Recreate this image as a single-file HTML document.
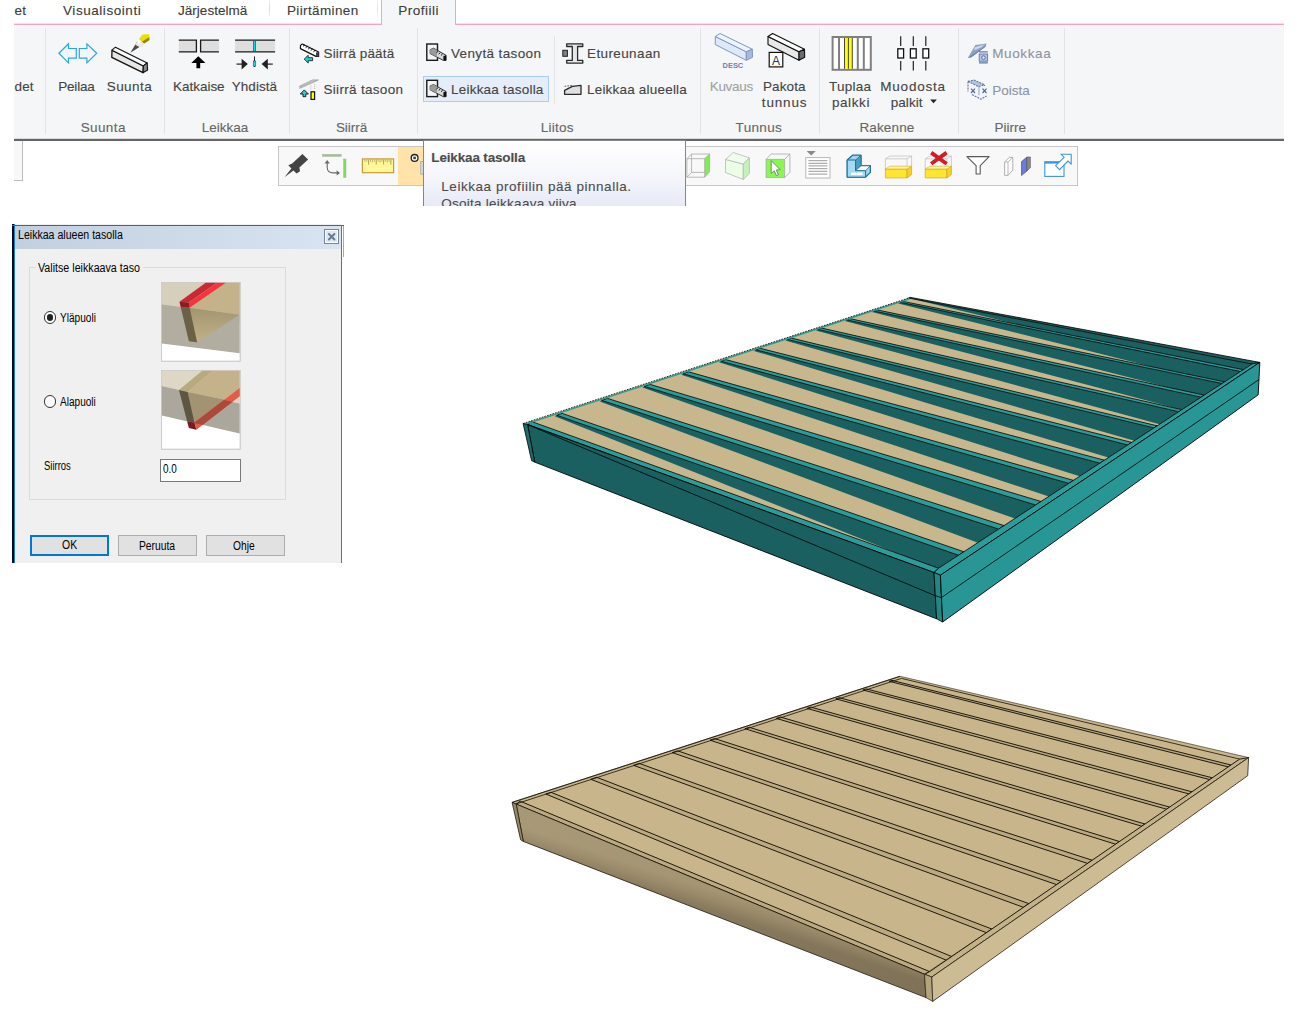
<!DOCTYPE html><html lang="fi"><head><meta charset="utf-8"><title>Leikkaa tasolla</title><style>
html,body{margin:0;padding:0;background:#fff;}
body{width:1296px;height:1032px;position:relative;overflow:hidden;font-family:'Liberation Sans',sans-serif;}
.t{position:absolute;white-space:pre;line-height:1;font-family:'Liberation Sans',sans-serif;}
.abs{position:absolute;}
#ribbon{position:absolute;left:14px;top:0;width:1270px;height:141px;overflow:hidden;}
#ribbon .body{position:absolute;left:0;top:25px;width:1270px;height:114px;background:#f5f6f7;}
#ribbon .bline{position:absolute;left:0;top:139.2px;width:1270px;height:1.7px;background:#666;}
#ribbon .bline0{position:absolute;left:0;top:138.4px;width:1270px;height:1px;background:#d9dadb;}
.pink{position:absolute;background:#f3a5c8;}
.sep{position:absolute;width:1px;background:#e2e3e4;top:28px;height:106px;}
.hl{position:absolute;left:409.4px;top:76.4px;width:125.2px;height:26px;box-sizing:border-box;border:1px solid #a9cdf4;background:#e5edf8;}
#toolbar{position:absolute;left:278px;top:146px;width:800px;height:39.6px;box-sizing:border-box;border:1px solid #c6c6c6;background:#f8f8f8;}
#tbhl{position:absolute;left:398px;top:147px;width:27px;height:37.6px;background:#ffe3a9;}
#leftbox{position:absolute;left:14px;top:141px;width:8.6px;height:39.6px;box-sizing:border-box;border-right:1px solid #bdbdbd;border-bottom:1px solid #bdbdbd;background:#f8f8f8;}
#tooltip{position:absolute;left:423px;top:139.9px;width:262.6px;height:66.1px;box-sizing:border-box;border:1px solid #858585;border-bottom:none;background:linear-gradient(#ffffff,#f4f5fb 60%,#e6eaf6);overflow:hidden;}
#dialog{position:absolute;left:12px;top:224px;width:330.2px;height:338.6px;background:linear-gradient(#fff,#fff 0.5px,#f0f0f0 0.5px);overflow:hidden;}
#dialog .title{position:absolute;left:3.2px;top:1.6px;right:1.2px;height:23.3px;background:linear-gradient(90deg,#c2cfdf,#d8e4f1);}
.grp{position:absolute;left:17px;top:43px;width:257px;height:233px;box-sizing:border-box;border:1px solid #dcdcdc;}
.btn{position:absolute;top:311.3px;height:20.6px;box-sizing:border-box;border:1px solid #adadad;background:#e1e1e1;}
.radio{position:absolute;width:12.6px;height:12.6px;box-sizing:border-box;border:1px solid #333;border-radius:50%;background:#fff;}
</style></head><body>
<div id="ribbon">
<div class="body"></div><div class="bline0"></div><div class="bline"></div>
<div class="pink" style="left:0;top:23px;width:368px;height:2px;background:linear-gradient(#fbdcea 50%,#f4a3c7 50%)"></div>
<div class="pink" style="left:441.4px;top:23px;width:829px;height:2px;background:linear-gradient(#fbdcea 50%,#f4a3c7 50%)"></div>
<div class="pink" style="left:366.9px;top:0;width:1.5px;height:25px"></div>
<div class="pink" style="left:440.9px;top:0;width:1.5px;height:25px"></div>
<div class="abs" style="left:368.2px;top:0;width:72.8px;height:25.4px;background:#f5f6f7"></div>
<div class="abs" style="left:255.2px;top:0;width:1px;height:17px;background:linear-gradient(#f3f3f3,#d8d8d8,#f3f3f3)"></div>
<div class="abs" style="left:362.6px;top:0;width:1px;height:17px;background:linear-gradient(#f6f6f6,#e2e2e2,#f6f6f6)"></div>
<div class="sep" style="left:31px"></div>
<div class="sep" style="left:150px"></div>
<div class="sep" style="left:275px"></div>
<div class="sep" style="left:403px"></div>
<div class="sep" style="left:686px"></div>
<div class="sep" style="left:805px"></div>
<div class="sep" style="left:944px"></div>
<div class="sep" style="left:1050px"></div>
<div class="sep" style="left:540px;top:36px;height:68px"></div>
<div class="hl"></div>
</div>
<div id="leftbox"></div>
<div id="toolbar"></div><div id="tbhl"></div>
<span class="t" style="left:14.5px;top:3.6px;font-size:13.5px;color:#3c3c3c;font-weight:400;letter-spacing:0.117px;-webkit-text-stroke:0.12px #3c3c3c">et</span>
<span class="t" style="left:63.0px;top:3.6px;font-size:13.5px;color:#3c3c3c;font-weight:400;letter-spacing:0.558px;-webkit-text-stroke:0.12px #3c3c3c">Visualisointi</span>
<span class="t" style="left:178.0px;top:3.6px;font-size:13.5px;color:#3c3c3c;font-weight:400;letter-spacing:0.024px;-webkit-text-stroke:0.12px #3c3c3c">Järjestelmä</span>
<span class="t" style="left:287.0px;top:3.6px;font-size:13.5px;color:#3c3c3c;font-weight:400;letter-spacing:0.370px;-webkit-text-stroke:0.12px #3c3c3c">Piirtäminen</span>
<span class="t" style="left:398.3px;top:3.6px;font-size:13.5px;color:#3c3c3c;font-weight:400;letter-spacing:0.492px;-webkit-text-stroke:0.12px #3c3c3c">Profiili</span>
<span class="t" style="left:14.5px;top:79.6px;font-size:13.5px;color:#444;font-weight:400;letter-spacing:0.173px;-webkit-text-stroke:0.12px #444">det</span>
<span class="t" style="left:58.3px;top:79.6px;font-size:13.5px;color:#444;font-weight:400;letter-spacing:-0.222px;-webkit-text-stroke:0.12px #444">Peilaa</span>
<span class="t" style="left:106.7px;top:79.6px;font-size:13.5px;color:#444;font-weight:400;letter-spacing:0.451px;-webkit-text-stroke:0.12px #444">Suunta</span>
<span class="t" style="left:173.0px;top:79.6px;font-size:13.5px;color:#444;font-weight:400;letter-spacing:-0.023px;-webkit-text-stroke:0.12px #444">Katkaise</span>
<span class="t" style="left:231.8px;top:79.6px;font-size:13.5px;color:#444;font-weight:400;letter-spacing:0.024px;-webkit-text-stroke:0.12px #444">Yhdistä</span>
<span class="t" style="left:323.5px;top:46.6px;font-size:13.5px;color:#444;font-weight:400;letter-spacing:0.146px;-webkit-text-stroke:0.12px #444">Siirrä päätä</span>
<span class="t" style="left:323.5px;top:82.6px;font-size:13.5px;color:#444;font-weight:400;letter-spacing:0.308px;-webkit-text-stroke:0.12px #444">Siirrä tasoon</span>
<span class="t" style="left:451.0px;top:46.6px;font-size:13.5px;color:#444;font-weight:400;letter-spacing:0.363px;-webkit-text-stroke:0.12px #444">Venytä tasoon</span>
<span class="t" style="left:451.0px;top:82.6px;font-size:13.5px;color:#444;font-weight:400;letter-spacing:0.219px;-webkit-text-stroke:0.12px #444">Leikkaa tasolla</span>
<span class="t" style="left:587.0px;top:46.6px;font-size:13.5px;color:#444;font-weight:400;letter-spacing:0.389px;-webkit-text-stroke:0.12px #444">Etureunaan</span>
<span class="t" style="left:587.0px;top:82.6px;font-size:13.5px;color:#444;font-weight:400;letter-spacing:0.198px;-webkit-text-stroke:0.12px #444">Leikkaa alueella</span>
<span class="t" style="left:709.7px;top:79.6px;font-size:13.5px;color:#a3a3a3;font-weight:400;letter-spacing:-0.289px;-webkit-text-stroke:0.12px #a3a3a3">Kuvaus</span>
<span class="t" style="left:763.0px;top:79.6px;font-size:13.5px;color:#444;font-weight:400;letter-spacing:0.111px;-webkit-text-stroke:0.12px #444">Pakota</span>
<span class="t" style="left:761.8px;top:95.6px;font-size:13.5px;color:#444;font-weight:400;letter-spacing:0.842px;-webkit-text-stroke:0.12px #444">tunnus</span>
<span class="t" style="left:828.9px;top:79.6px;font-size:13.5px;color:#444;font-weight:400;letter-spacing:0.270px;-webkit-text-stroke:0.12px #444">Tuplaa</span>
<span class="t" style="left:831.9px;top:95.6px;font-size:13.5px;color:#444;font-weight:400;letter-spacing:0.597px;-webkit-text-stroke:0.12px #444">palkki</span>
<span class="t" style="left:880.3px;top:79.6px;font-size:13.5px;color:#444;font-weight:400;letter-spacing:0.775px;-webkit-text-stroke:0.12px #444">Muodosta</span>
<span class="t" style="left:890.7px;top:95.6px;font-size:13.5px;color:#444;font-weight:400;letter-spacing:0.064px;-webkit-text-stroke:0.12px #444">palkit</span>
<span class="t" style="left:992.2px;top:46.6px;font-size:13.5px;color:#8e94a4;font-weight:400;letter-spacing:0.617px;-webkit-text-stroke:0.12px #8e94a4">Muokkaa</span>
<span class="t" style="left:992.2px;top:83.6px;font-size:13.5px;color:#8e94a4;font-weight:400;letter-spacing:0.011px;-webkit-text-stroke:0.12px #8e94a4">Poista</span>
<span class="t" style="left:80.7px;top:120.6px;font-size:13.5px;color:#666;font-weight:400;letter-spacing:0.384px;-webkit-text-stroke:0.12px #666">Suunta</span>
<span class="t" style="left:201.7px;top:120.6px;font-size:13.5px;color:#666;font-weight:400;letter-spacing:0.008px;-webkit-text-stroke:0.12px #666">Leikkaa</span>
<span class="t" style="left:335.9px;top:120.6px;font-size:13.5px;color:#666;font-weight:400;letter-spacing:-0.036px;-webkit-text-stroke:0.12px #666">Siirrä</span>
<span class="t" style="left:540.8px;top:120.6px;font-size:13.5px;color:#666;font-weight:400;letter-spacing:0.231px;-webkit-text-stroke:0.12px #666">Liitos</span>
<span class="t" style="left:735.6px;top:120.6px;font-size:13.5px;color:#666;font-weight:400;letter-spacing:0.328px;-webkit-text-stroke:0.12px #666">Tunnus</span>
<span class="t" style="left:859.4px;top:120.6px;font-size:13.5px;color:#666;font-weight:400;letter-spacing:0.150px;-webkit-text-stroke:0.12px #666">Rakenne</span>
<span class="t" style="left:994.4px;top:120.6px;font-size:13.5px;color:#666;font-weight:400;letter-spacing:0.014px;-webkit-text-stroke:0.12px #666">Piirre</span>
<svg class="abs" style="left:0;top:0" width="1296" height="200" viewBox="0 0 1296 200">
<polygon points="58.9,53.2 68.5,43.8 68.5,48.5 76.3,48.5 76.3,58.1 68.5,58.1 68.5,62.9" fill="none" stroke="#29a8e8" stroke-width="1.2"/>
<polygon points="96.7,53.2 86.9,43.8 86.9,48.5 79.3,48.5 79.3,58.1 86.9,58.1 86.9,62.9" fill="none" stroke="#29a8e8" stroke-width="1.2"/>
<polygon points="112,50.2 143.4,65.9 143,72.7 111.8,57.4" fill="#e6e6e6" stroke="#111" stroke-width="1.3" stroke-linejoin="round"/>
<polygon points="112,50.2 115.4,47.2 147.2,62.9 143.4,65.9" fill="#fafafa" stroke="#111" stroke-width="1.1" stroke-linejoin="round"/>
<polygon points="143.4,65.9 147.2,62.9 147.6,70.1 143,72.7" fill="#8a8a8a" stroke="#111" stroke-width="1.1" stroke-linejoin="round"/>
<polygon points="130.4,52.8 137.6,40.8 143.4,44.6" fill="#4a4a4a"/>
<polygon points="135.2,44.8 138.6,39.4 144.2,43.4 140.2,47.4" fill="#ecece4"/>
<polygon points="137.4,41.2 139,38.8 141.6,40.8 138.6,43.8" fill="#fff"/>
<polygon points="138.8,39.2 142.4,34.4 149.2,34.2 149.4,40 144.4,43.6" fill="#e8e200"/>
<polygon points="144.4,43.6 149.4,40 149.4,37 141.8,41.8" fill="#8f8a00"/>
<rect x="178.8" y="40.2" width="17.6" height="11.6" fill="#dedede"/>
<polyline points="178.8,40.2 196.4,40.2 196.4,51.8 178.8,51.8" fill="none" stroke="#1a1a1a" stroke-width="1.3"/>
<rect x="200.6" y="40.2" width="18.3" height="11.6" fill="#dedede"/>
<polyline points="218.9,40.2 200.6,40.2 200.6,51.8 218.9,51.8" fill="none" stroke="#1a1a1a" stroke-width="1.3"/>
<polygon points="198.3,56.2 205.4,63 200.2,63 200.2,68.2 196.4,68.2 196.4,63 191.3,63" fill="#000"/>
<rect x="235.1" y="40.2" width="40" height="11.6" fill="#dedede"/>
<path d="M235.1 40.2H275.1M235.1 51.8H275.1" stroke="#1a1a1a" stroke-width="1.3"/>
<rect x="253.3" y="40.8" width="2.4" height="10.4" fill="#22d4e4" stroke="#0a4a55" stroke-width="0.6"/>
<path d="M236.5 64.1H242" stroke="#222" stroke-width="1.2"/><polygon points="241.6,58.8 247.8,64.1 241.6,69.6" fill="#222"/>
<path d="M272.8 64.1H267" stroke="#222" stroke-width="1.2"/><polygon points="267.8,58.8 261.6,64.1 267.8,69.6" fill="#222"/>
<path d="M254.5 56.4V67" stroke="#222" stroke-width="1"/><rect x="253.2" y="61" width="2.6" height="5.2" fill="#22d4e4" stroke="#0a4a55" stroke-width="0.5"/>
<polygon points="300.5,45.4 302.3,44 318.6,52 318.6,56.4 316,56.4 300.4,48.6" fill="#fff" stroke="#111" stroke-width="1.2" stroke-linejoin="round"/>
<path d="M303 46.3l2-1.6M305.6 47.7l2-1.6M308.2 49l2-1.6M310.8 50.4l2-1.6M313.4 51.8l2-1.6" stroke="#111" stroke-width="1"/>
<polygon points="316,52.6 318.6,52 318.6,56.4 316,56.4" fill="#444"/>
<polygon points="304.2,59.1 308.2,55.3 308.2,57.7 312.6,57.7 312.6,60.7 308.2,60.7 308.2,63.1" fill="#22d0d8" stroke="#111" stroke-width="0.8"/>
<polygon points="299.2,86.8 313,80.4 318.6,79.8 316,81.7 299.4,89" fill="#b5b5b5"/>
<path d="M299.1 86.5L312.3 80H318.7" fill="none" stroke="#888" stroke-width="0.7"/>
<path d="M310.8 85.5V90M314.6 84V90" stroke="#aaa" stroke-width="0.7" stroke-dasharray="1,1"/>
<rect x="311" y="91.8" width="3.6" height="7.6" fill="#ffff00" stroke="#111" stroke-width="1.2"/>
<polygon points="304.3,89.9 308.4,94 305.8,94 305.8,96.7 303,96.7 303,94 300.3,94" fill="#22d0d8" stroke="#111" stroke-width="0.9"/>
<rect x="426.8" y="44.0" width="10.7" height="16.3" fill="#f4f5f8" stroke="#1a1a1a" stroke-width="1.4"/>
<polygon points="430.2,49.6 433.6,48.2 446.1,55.3 446.1,60.4 443.4,60.4 430.2,53.6" fill="#d8d8d8" stroke="#222" stroke-width="0.9" stroke-linejoin="round"/>
<polygon points="430.2,49.6 433.6,48.2 437.0,50.2 437.0,57.0 430.2,53.6" fill="#9a9a9a"/>
<path d="M438 51.4l-1.6 1.4M440.3 52.7l-1.6 1.4M442.6 54.0l-1.6 1.4" stroke="#111" stroke-width="1"/>
<polygon points="443.4,56.0 446.1,55.3 446.1,60.4 443.4,60.4" fill="#111"/>
<rect x="426.8" y="80.3" width="10.7" height="16.3" fill="#f4f5f8" stroke="#1a1a1a" stroke-width="1.4"/>
<polygon points="430.2,85.9 433.6,84.5 446.1,91.6 446.1,96.7 443.4,96.7 430.2,89.9" fill="#d8d8d8" stroke="#222" stroke-width="0.9" stroke-linejoin="round"/>
<polygon points="430.2,85.9 433.6,84.5 437.0,86.5 437.0,93.3 430.2,89.9" fill="#9a9a9a"/>
<path d="M438 87.7l-1.6 1.4M440.3 89.0l-1.6 1.4M442.6 90.3l-1.6 1.4" stroke="#111" stroke-width="1"/>
<polygon points="443.4,92.3 446.1,91.6 446.1,96.7 443.4,96.7" fill="#111"/>
<path d="M566.7 43.8H582.8V46.5H577.6V60.4H582.8V63.1H566.7V60.4H572.3V46.5H566.7Z" fill="#e6e6e6" stroke="#2a2a2a" stroke-width="1.3" stroke-linejoin="round"/>
<rect x="562.8" y="50.3" width="4.6" height="6" fill="#808080" stroke="#222" stroke-width="1"/>
<polygon points="564.6,94.3 581,94.3 581,85.4 572.4,86.3 564.6,90.4" fill="#e0e0e0" stroke="#2a2a2a" stroke-width="1.3" stroke-linejoin="round"/>
<path d="M564.6 86.3L573 85.4" stroke="#444" stroke-width="0.9" stroke-dasharray="1.6,1.2"/>
<polygon points="715.3,36.5 746.3,51.8 746.3,60.3 715.3,44.6" fill="#dde9f8" stroke="#8096c4" stroke-width="1" stroke-linejoin="round"/>
<polygon points="715.3,36.5 720,33.5 752.3,49.2 746.3,51.8" fill="#edf4fc" stroke="#8096c4" stroke-width="1" stroke-linejoin="round"/>
<polygon points="746.3,51.8 752.3,49.2 752.5,57.3 746.3,60.3" fill="#a9b9d9" stroke="#8096c4" stroke-width="1" stroke-linejoin="round"/>
<text x="722.6" y="68.3" font-family="Liberation Sans, sans-serif" font-size="7.6" font-weight="700" fill="#6a82b4" textLength="20.6" lengthAdjust="spacingAndGlyphs">DESC</text>
<polygon points="768,36.5 799,51.8 799,60.3 768,44.6" fill="#e8e8e8" stroke="#111" stroke-width="1.1" stroke-linejoin="round"/>
<polygon points="768,36.5 772.6,33.5 804.5,49.2 799,51.8" fill="#fdfdfd" stroke="#111" stroke-width="1.1" stroke-linejoin="round"/>
<polygon points="799,51.8 804.5,49.2 804.7,57.3 799,60.3" fill="#6c6c6c" stroke="#111" stroke-width="1.1" stroke-linejoin="round"/>
<rect x="769.2" y="52.4" width="13.6" height="14.5" fill="#fff" stroke="#111" stroke-width="1.2"/>
<text x="776" y="65" text-anchor="middle" font-family="Liberation Sans, sans-serif" font-size="12" fill="#333">A</text>
<rect x="832.6" y="37" width="38.2" height="32.8" fill="#fff" stroke="#808080" stroke-width="2"/>
<path d="M839 37V70M857.8 37V70M863.8 37V70" stroke="#808080" stroke-width="2"/>
<rect x="844.6" y="38" width="7.6" height="30.8" fill="#ffff00"/>
<path d="M844.5 38V68.8M848.4 38V68.8M852.3 38V68.8" stroke="#333" stroke-width="0.9"/>
<path d="M900.7 36.2V45.9M900.7 61.1V70.6" stroke="#222" stroke-width="1.2"/>
<rect x="897.8" y="48.8" width="5.8" height="9.2" fill="#fff" stroke="#111" stroke-width="1.3"/>
<path d="M913.3 36.2V45.9M913.3 61.1V70.6" stroke="#222" stroke-width="1.2"/>
<rect x="910.4" y="48.8" width="5.8" height="9.2" fill="#fff" stroke="#111" stroke-width="1.3"/>
<path d="M925.8 36.2V45.9M925.8 61.1V70.6" stroke="#222" stroke-width="1.2"/>
<rect x="922.9" y="48.8" width="5.8" height="9.2" fill="#fff" stroke="#111" stroke-width="1.3"/>
<polygon points="930.2,99.6 936.9,99.6 933.5,103.2" fill="#222"/>
<polygon points="967.8,58 975.4,45 986.6,43.4 985.8,46.6 971.4,57.2" fill="#8fa2c6"/>
<polygon points="975,47.2 984.4,44.4 981.4,47.2 974,50.2" fill="#cfdaec"/>
<polygon points="967.8,58 971.4,57.2 985.8,46.6 984.6,46.4 971,55.8" fill="#7085ae"/>
<rect x="979.2" y="54" width="8.4" height="7.2" fill="#b4c3de" stroke="#5f78a8" stroke-width="0.9"/>
<path d="M979 51.9H987.8M979 62.9H987.8" stroke="#5f78a8" stroke-width="1.1"/>
<circle cx="983.5" cy="57.6" r="1.8" fill="#dfe6f2" stroke="#546ea2" stroke-width="1"/>
<polygon points="968,81.4 974,80 984.5,84.8 978.5,86.6" fill="#b6c4de"/>
<path d="M968 81.4L978.5 86.6L984.5 84.8M968 81.4L974 80L984.5 84.8M968 81.4V91.5M978.8 86.6V95M984.5 84.8V86M972 94.5L981 99.2L986.5 96" fill="none" stroke="#5a74a6" stroke-width="1.1" stroke-dasharray="2,1"/>
<path d="M971 88.6l4 4.4M975 88.6l-4 4.4M982.5 88.6l4 4.4M986.5 88.6l-4 4.4" stroke="#4f699c" stroke-width="1.2"/>
<rect x="978.2" y="86.8" width="1.6" height="8.5" fill="#c3d0e6"/>
<polygon points="284.4,177.2 291.4,168.4 288.3,165.2 292.2,163.6 302.4,153.9 308.1,159.6 299.4,167.6 300,171.2 296.6,173.6 293.4,170.4" fill="#444"/>
<rect x="322.4" y="154.3" width="18.8" height="2" fill="#7be051" stroke="#b5b5b5" stroke-width="0.6"/>
<rect x="343.6" y="159" width="2.4" height="18.6" fill="#7be051" stroke="#b5b5b5" stroke-width="0.6"/>
<path d="M327.2 162V167.5Q327.5 172.9 333 172.9H338" fill="none" stroke="#6a6a6a" stroke-width="1.1"/>
<polygon points="327.2,160 324.6,163.4 329.8,163.4" fill="#6a6a6a"/><polygon points="340,172.9 336.6,170.3 336.6,175.5" fill="#6a6a6a"/>
<rect x="362.4" y="158.9" width="31.2" height="13.8" fill="#fff799" stroke="#c79a3c" stroke-width="1.2"/>
<path d="M368.6 159.5V164.5M376.2 159.5V164.5M383.6 159.5V164.5M390.9 159.5V164.5" stroke="#9a8a50" stroke-width="0.8"/>
<path d="M364.9 159.5V161.8M366.8 159.5V161.8M370.5 159.5V161.8M372.4 159.5V162.5M374.3 159.5V161.8M378.1 159.5V161.8M380 159.5V162.5M381.8 159.5V161.8M385.4 159.5V161.8M387.3 159.5V162.5M389.1 159.5V161.8" stroke="#9a8a50" stroke-width="0.6"/>
<circle cx="414.6" cy="157.9" r="3.4" fill="#fff" stroke="#222" stroke-width="1.3"/><rect x="413.3" y="156.6" width="2.6" height="2.6" fill="#444"/>
<rect x="420.8" y="161.6" width="2.4" height="12.6" fill="#ddd" stroke="#999" stroke-width="0.7"/>
<polygon points="704.7,158.7 709.6,154 709.6,171.8 704.7,177.2" fill="#7cf050"/>
<path d="M686.9 158.7H704.7V177.2H686.9ZM691.6 154H709.6V171.8M686.9 158.7L691.6 154M704.7 158.7L709.6 154M704.7 177.2L709.6 171.8M691.6 154V172.4H704.7M686.9 177.2L691.6 172.4" fill="none" stroke="#a8a8a8" stroke-width="0.8"/>
<polygon points="725.5,159.4 743.3,164.1 743.3,179.5 725.5,172.5" fill="#ecfde6" stroke="#b8b8b8" stroke-width="0.8" stroke-linejoin="round"/>
<polygon points="725.5,159.4 733.2,152.5 749.4,157.9 743.3,164.1" fill="#f0fdec" stroke="#b8b8b8" stroke-width="0.8" stroke-linejoin="round"/>
<polygon points="743.3,164.1 749.4,157.9 749.4,173.3 743.3,179.5" fill="#c6f2b8" stroke="#b8b8b8" stroke-width="0.8" stroke-linejoin="round"/>
<rect x="766.1" y="159.4" width="18.5" height="18.2" fill="#86f850"/>
<path d="M766.1 159.4H784.6V177.6H766.1ZM771 154H789.9V172.5L784.6 177.6M766.1 159.4L771 154M784.6 159.4L789.9 154" fill="none" stroke="#a8a8a8" stroke-width="0.8"/>
<polygon points="771.2,160.6 771.2,173.4 774.2,170.8 776.4,175.6 778.4,174.7 776.3,170 780.2,169.7" fill="#fff" stroke="#777" stroke-width="0.9" stroke-linejoin="round"/>
<rect x="805.8" y="157.6" width="24.2" height="20.4" fill="#fff" stroke="#b0b0b0" stroke-width="0.9"/>
<path d="M808.4 160.7H827.4M808.4 163.3H827.4M808.4 165.9H827.4M808.4 168.7H827.4M808.4 171.3H827.4M808.4 174.1H827.4" stroke="#999" stroke-width="1"/>
<polygon points="806.6,150.9 815.8,150.9 811.2,155.6" fill="#8a8a8a"/>
<polygon points="847.2,160 852.5,155.2 861,155.2 861,165.6 870.4,165.6 870.4,172.4 865.6,177.2 847.2,177.2" fill="#9ed6f2" stroke="#1d6d94" stroke-width="1.2" stroke-linejoin="round"/>
<polygon points="847.2,160 855.6,160 855.6,170.6 865.6,170.6 865.6,177.2 847.2,177.2" fill="#a4daf4" stroke="#1d6d94" stroke-width="1" stroke-linejoin="round"/>
<polygon points="855.6,160 861,155.2 861,165.6 855.6,170.6" fill="#4a9cc4" stroke="#1d6d94" stroke-width="0.8"/>
<polygon points="855.6,170.6 861,165.8 870.4,165.8 865.6,170.6" fill="#fff" stroke="#1d6d94" stroke-width="0.8"/>
<path d="M851 172.6H862.5V175H851Z" fill="#fff"/>
<path d="M885.4 158.8H907.0V169H885.4ZM890.0 156H911.6V166M885.4 158.8L890.0 156M907.0 158.8L911.6 156" fill="none" stroke="#c4c4c4" stroke-width="0.8"/>
<polygon points="885.4,169.0 907.0,169.0 907.0,177.9 885.4,177.9" fill="#ffe533" stroke="#d4b020" stroke-width="0.8"/>
<polygon points="907.0,169.0 911.6,166.2 911.6,174.6 907.0,177.9" fill="#f2d222" stroke="#d4b020" stroke-width="0.8"/>
<polygon points="885.4,169.0 890.0,166.2 911.6,166.2 907.0,169.0" fill="#fff3a0" stroke="#d4b020" stroke-width="0.6"/>
<path d="M925.2 158.8H946.8V169H925.2ZM929.8 156H951.4V166M925.2 158.8L929.8 156M946.8 158.8L951.4 156" fill="none" stroke="#c4c4c4" stroke-width="0.8"/>
<polygon points="925.2,169.0 946.8,169.0 946.8,177.9 925.2,177.9" fill="#ffe533" stroke="#d4b020" stroke-width="0.8"/>
<polygon points="946.8,169.0 951.4,166.2 951.4,174.6 946.8,177.9" fill="#f2d222" stroke="#d4b020" stroke-width="0.8"/>
<polygon points="925.2,169.0 929.8,166.2 951.4,166.2 946.8,169.0" fill="#fff3a0" stroke="#d4b020" stroke-width="0.6"/>
<path d="M931.2 152.6L946.6 163.8M946.6 152.6L931.2 163.8" stroke="#d01c24" stroke-width="3.8"/>
<polygon points="966.9,156.6 989.1,156.6 980.2,165.6 980.2,174 976.1,174 976.1,165.6" fill="#fff" stroke="#5a5a5a" stroke-width="1.1" stroke-linejoin="round"/>
<polygon points="1004.6,162 1009.4,157.4 1012.8,157.4 1012.8,170 1008,175.4 1004.6,175.4" fill="#fdfdfd" stroke="#a8a8a8" stroke-width="0.9" stroke-linejoin="round"/>
<path d="M1004.6 162H1008V175.4M1008 162L1012.8 157.4" fill="none" stroke="#a8a8a8" stroke-width="0.8"/>
<polygon points="1021.5,161.6 1027,157 1027,170.9 1021.5,175.5" fill="#6b7be0" stroke="#555" stroke-width="0.7"/>
<polygon points="1027,157 1030.4,157 1030.4,167.5 1027,170.9" fill="#8a8a8a" stroke="#555" stroke-width="0.6"/>
<rect x="1044.8" y="161.8" width="19.2" height="14.6" fill="#fff" stroke="#3a96dd" stroke-width="1.1"/>
<path d="M1044.8 162.6H1064" stroke="#3a96dd" stroke-width="2"/>
<polygon points="1061,154.2 1071.2,154.2 1071.2,164.2 1068,161 1059.6,169.6 1055.6,165.6 1064.2,157.4" fill="#fff" stroke="#3a96dd" stroke-width="1.1" stroke-linejoin="round"/>
</svg>
<div id="tooltip">
<span class="t" style="left:7.3px;top:9.7px;font-size:13.5px;color:#4c4c4c;font-weight:700;letter-spacing:-0.158px;-webkit-text-stroke:0.12px #4c4c4c">Leikkaa tasolla</span>
<span class="t" style="left:17.3px;top:38.7px;font-size:13.5px;color:#4c4c4c;font-weight:400;letter-spacing:0.546px;-webkit-text-stroke:0.12px #4c4c4c">Leikkaa profiilin pää pinnalla.</span>
<span class="t" style="left:17.3px;top:55.7px;font-size:13.5px;color:#4c4c4c;font-weight:400;letter-spacing:0.254px;-webkit-text-stroke:0.12px #4c4c4c">Osoita leikkaava viiva</span>
</div>
<div id="dialog">
<div class="abs" style="left:0;top:0;width:2px;height:100%;background:#050b16"></div>
<div class="abs" style="left:2px;top:0;width:1.2px;height:100%;background:#1b7ad2"></div>
<div class="title"></div>
<div class="abs" style="left:0;top:0.5px;width:331.8px;height:1.2px;background:#5e5e5e"></div>
<div class="abs" style="right:0;top:0.6px;width:1.1px;height:100%;background:#707070"></div>
<div class="abs" style="left:312.2px;top:5.2px;width:14.8px;height:14.8px;box-sizing:border-box;border:1px solid #77879b;background:#dde8f6;box-shadow:inset 0 0 0 1px #fdfeff"></div>
<svg class="abs" style="left:312px;top:5px" width="16" height="16"><path d="M4.9 5L10.4 10.5M10.4 5L4.9 10.5" stroke="#697a8d" stroke-width="2" stroke-linecap="round"/></svg>
<div class="grp"></div>
<div class="abs" style="left:24px;top:38px;width:107px;height:12px;background:#f0f0f0"></div>
<div class="radio" style="left:31.9px;top:87.2px"></div><div class="abs" style="left:35.1px;top:90.4px;width:6.2px;height:6.2px;border-radius:50%;background:#222"></div>
<div class="radio" style="left:31.9px;top:171.4px"></div>
<div class="abs" style="left:148.2px;top:235.4px;width:80.8px;height:22.4px;box-sizing:border-box;border:1px solid #7a7a7a;background:#fff"></div>
<div class="btn" style="left:18.4px;width:78.8px;border:2px solid #0078d7"></div>
<div class="btn" style="left:106px;width:79px"></div>
<div class="btn" style="left:194px;width:79px"></div>
<svg class="abs" style="left:149.1px;top:58.1px" width="79.5" height="79.5" viewBox="-0.8 -0.8 80.6 80.6"><rect x="-0.5" y="-0.5" width="80" height="80" fill="#fff" stroke="#c2c2c2" stroke-width="1"/><rect x="0" y="0" width="79" height="40" fill="#d6cfbc"/><polygon points="0,22 79,32.3 79,71.5 0,61.5" fill="#b1ada1"/><polygon points="28.3,25.3 65,0 79,0 79,32.3" fill="#c4b38a"/><defs><linearGradient id="p1" x1="0" y1="0" x2="0" y2="1"><stop offset="0" stop-color="#a29570"/><stop offset="1" stop-color="#c2b189"/></linearGradient></defs><polygon points="28.3,25.3 79,32.3 35.8,60.2" fill="url(#p1)"/><polygon points="19.2,24.9 28.3,25.3 35.8,60.2 27.5,59.3" fill="#6a6147"/><polygon points="17.9,19.2 44.5,0 55.8,0 27.5,20" fill="#c82a35"/><polygon points="27.5,20 55.8,0 65,0 28.3,25.3" fill="#f2363f"/><polygon points="17.9,19.2 27.5,20 28.3,25.3 19.2,24.9" fill="#8e1a22"/></svg>
<svg class="abs" style="left:149.1px;top:146.1px" width="79.5" height="79.5" viewBox="-0.8 -0.8 80.6 80.6"><rect x="-0.5" y="-0.5" width="80" height="80" fill="#fff" stroke="#c2c2c2" stroke-width="1"/><polygon points="0,0 79,0 79,33.1 0,15.3" fill="#dfd7c5"/><polygon points="0,15.3 79,33.1 79,63.7 0,45.3" fill="#aca79d"/><polygon points="17.4,19.6 41,0 51.5,0 26.2,21.4" fill="#b9a980"/><polygon points="26.2,21.4 51.5,0 79,0 79,26 71.5,31" fill="#c4b38a"/><polygon points="71.5,31 79,25.7 79,33.1" fill="#ddd5c3"/><polygon points="26.2,21.4 71.5,31 33.1,52.3" fill="#a29472"/><polygon points="17.4,19.6 26.2,21.4 33.1,52.3 25.7,51.5" fill="#5e5640"/><defs><clipPath id="gb"><polygon points="0,15.3 79,33.1 79,63.7 0,45.3"/></clipPath></defs><polygon points="33.1,52.3 79,17.4 79,25.7 35.1,59.7" fill="#e45c49"/><polygon points="33.1,52.3 79,17.4 79,25.7 35.1,59.7" fill="#ad493b" clip-path="url(#gb)"/><polygon points="25.7,51.5 33.1,52.3 35.1,59.7 27.5,58" fill="#7a1a1e"/></svg>
<span class="t" style="left:6.3px;top:4.9px;font-size:12px;color:#000;font-weight:400;letter-spacing:0.000px;transform:scaleX(0.8824);transform-origin:0 0">Leikkaa alueen tasolla</span>
<span class="t" style="left:26.0px;top:37.9px;font-size:12px;color:#000;font-weight:400;letter-spacing:0.000px;transform:scaleX(0.8907);transform-origin:0 0">Valitse leikkaava taso</span>
<span class="t" style="left:48.2px;top:87.9px;font-size:12px;color:#000;font-weight:400;letter-spacing:0.000px;transform:scaleX(0.8407);transform-origin:0 0">Yläpuoli</span>
<span class="t" style="left:48.2px;top:171.9px;font-size:12px;color:#000;font-weight:400;letter-spacing:0.000px;transform:scaleX(0.8383);transform-origin:0 0">Alapuoli</span>
<span class="t" style="left:32.2px;top:235.9px;font-size:12px;color:#000;font-weight:400;letter-spacing:0.000px;transform:scaleX(0.7879);transform-origin:0 0">Siirros</span>
<span class="t" style="left:150.7px;top:238.9px;font-size:12px;color:#000;font-weight:400;letter-spacing:0.000px;transform:scaleX(0.8270);transform-origin:0 0">0.0</span>
<span class="t" style="left:49.7px;top:314.9px;font-size:12px;color:#000;font-weight:400;letter-spacing:0.000px;transform:scaleX(0.8706);transform-origin:0 0">OK</span>
<span class="t" style="left:127.1px;top:315.9px;font-size:12px;color:#000;font-weight:400;letter-spacing:0.000px;transform:scaleX(0.8589);transform-origin:0 0">Peruuta</span>
<span class="t" style="left:221.4px;top:315.9px;font-size:12px;color:#000;font-weight:400;letter-spacing:0.000px;transform:scaleX(0.8518);transform-origin:0 0">Ohje</span>
</div>
<div class="abs" style="left:343px;top:225px;width:1px;height:32px;background:#a8a8a8"></div>
<div class="abs" style="left:342px;top:224.5px;width:2px;height:1.2px;background:#5e5e5e"></div>
<svg class="abs" style="left:0;top:0" width="1296" height="1032" viewBox="0 0 1296 1032" shape-rendering="geometricPrecision">
<g><polygon points="523.1,423.5 910.5,297.4 1259.8,362.4 934.0,572.5" fill="#c8b68c"/>
<polygon points="908.5,298.0 1252.0,364.0 1232.7,376.6" fill="#1b6060"/>
<polygon points="908.5,298.0 910.5,297.4 1259.8,362.4 1252.0,364.0" fill="#1b6060" stroke="#000" stroke-width="0.8"/>
<polygon points="900.0,302.3 1240.5,371.5 1221.3,384.0 898.2,303.4" fill="#1b6060"/>
<polygon points="900.0,302.3 902.9,301.4 1243.3,369.6 1240.5,371.5" fill="#2a9c9a" stroke="#000" stroke-width="0.8" stroke-linejoin="round"/>
<polygon points="873.7,311.0 1222.0,383.5 1202.8,396.1 871.9,312.1" fill="#1b6060"/>
<polygon points="873.7,311.0 877.0,309.9 1224.6,381.8 1222.0,383.5" fill="#2a9c9a" stroke="#000" stroke-width="0.8" stroke-linejoin="round"/>
<polygon points="846.6,319.9 1201.1,397.2 1181.8,409.7 844.8,321.0" fill="#1b6060"/>
<polygon points="846.6,319.9 850.2,318.7 1204.2,395.1 1201.1,397.2" fill="#2a9c9a" stroke="#000" stroke-width="0.8" stroke-linejoin="round"/>
<polygon points="817.7,329.4 1178.8,411.7 1159.5,424.3 815.9,330.5" fill="#1b6060"/>
<polygon points="817.7,329.4 821.7,328.1 1181.9,409.7 1178.8,411.7" fill="#2a9c9a" stroke="#000" stroke-width="0.8" stroke-linejoin="round"/>
<polygon points="787.1,339.4 1154.0,427.9 1134.3,440.7 785.3,340.5" fill="#1b6060"/>
<polygon points="787.1,339.4 791.3,338.1 1157.2,425.8 1154.0,427.9" fill="#2a9c9a" stroke="#000" stroke-width="0.8" stroke-linejoin="round"/>
<polygon points="755.7,349.8 1127.8,445.0 1108.4,457.6 753.9,350.9" fill="#1b6060"/>
<polygon points="755.7,349.8 760.2,348.3 1131.7,442.4 1127.8,445.0" fill="#2a9c9a" stroke="#000" stroke-width="0.8" stroke-linejoin="round"/>
<polygon points="720.8,361.2 1099.8,463.2 1079.7,476.3 719.0,362.3" fill="#1b6060"/>
<polygon points="720.8,361.2 725.7,359.6 1104.4,460.2 1099.8,463.2" fill="#2a9c9a" stroke="#000" stroke-width="0.8" stroke-linejoin="round"/>
<polygon points="683.0,373.7 1068.9,483.4 1048.9,496.4 681.2,374.7" fill="#1b6060"/>
<polygon points="683.0,373.7 688.5,371.8 1073.5,480.4 1068.9,483.4" fill="#2a9c9a" stroke="#000" stroke-width="0.8" stroke-linejoin="round"/>
<polygon points="644.3,386.4 1035.7,505.0 1014.9,518.6 642.5,387.5" fill="#1b6060"/>
<polygon points="644.3,386.4 650.2,384.4 1041.1,501.5 1035.7,505.0" fill="#2a9c9a" stroke="#000" stroke-width="0.8" stroke-linejoin="round"/>
<polygon points="601.6,400.4 998.7,529.1 977.9,542.7 599.8,401.5" fill="#1b6060"/>
<polygon points="601.6,400.4 607.6,398.4 1004.1,525.6 998.7,529.1" fill="#2a9c9a" stroke="#000" stroke-width="0.8" stroke-linejoin="round"/>
<polygon points="556.6,415.2 958.6,555.3 937.2,569.2 554.8,416.3" fill="#1b6060"/>
<polygon points="556.6,415.2 562.1,413.4 964.0,551.8 958.6,555.3" fill="#2a9c9a" stroke="#000" stroke-width="0.8" stroke-linejoin="round"/>
<polygon points="527.6,424.4 531.2,421.4 938.6,568.2 934.0,572.5" fill="#2a9c9a" stroke="#000" stroke-width="0.8" stroke-linejoin="round"/>
<polygon points="934.0,572.5 938.6,568.2 1252.0,364.0 1259.8,362.4 940.4,575.2" fill="#2a9c9a" stroke="#000" stroke-width="0.8" stroke-linejoin="round"/>
<polyline points="524.6,424.4 909.5,298.7" fill="none" stroke="#2a9c9a" stroke-width="1.5"/>
<polyline points="523.1,423.5 910.5,297.4" fill="none" stroke="#1a1a10" stroke-width="0.9" stroke-dasharray="1.6,1.2"/>
<polygon points="527.6,424.6 934.0,572.5 936.6,618.8 534.7,462.1" fill="#1b6060" stroke="#000" stroke-width="0.9" stroke-linejoin="round"/>
<polygon points="523.1,423.5 527.6,424.6 534.7,462.1 531.6,460.7" fill="#1e6c6b" stroke="#000" stroke-width="0.8" stroke-linejoin="round"/>
<polyline points="527.6,424.6 935.2,595.7" fill="none" stroke="#000" stroke-width="0.8"/>
<polygon points="934.0,572.5 940.4,575.2 942.7,622.0 936.6,618.8" fill="#218684" stroke="#000" stroke-width="0.8"/>
<polygon points="940.4,575.2 1259.8,362.4 1258.2,394.8 942.7,622.0" fill="#289694" stroke="#000" stroke-width="0.9"/>
<polyline points="935.2,595.7 941.4,597.6 1259.2,379.4" fill="none" stroke="#000" stroke-width="0.8"/></g>
<g><defs><linearGradient id="lg" gradientUnits="userSpaceOnUse" x1="704.1" y1="887.5" x2="697.8" y2="906.5"><stop offset="0" stop-color="#a59572"/><stop offset="0.45" stop-color="#9a8a69"/><stop offset="1" stop-color="#87785b"/></linearGradient><linearGradient id="lg2" gradientUnits="userSpaceOnUse" x1="512" y1="0" x2="926" y2="0"><stop offset="0" stop-color="#fff" stop-opacity="0.03"/><stop offset="1" stop-color="#000" stop-opacity="0.05"/></linearGradient></defs>
<polygon points="512.1,802.4 900.0,676.3 1248.6,757.6 924.5,974.3" fill="#c8b58b" stroke="#4a4330" stroke-width="0.7"/>
<polygon points="545.8,794.0 551.1,792.3 951.7,956.5 946.3,960.2" fill="#bca97f" stroke="#15120a" stroke-width="0.95" stroke-linejoin="round"/>
<polygon points="590.8,779.3 596.7,777.3 991.8,929.0 986.4,932.7" fill="#bca97f" stroke="#15120a" stroke-width="0.95" stroke-linejoin="round"/>
<polygon points="633.5,765.3 639.2,763.4 1028.8,903.6 1023.4,907.3" fill="#bca97f" stroke="#15120a" stroke-width="0.95" stroke-linejoin="round"/>
<polygon points="672.2,752.6 677.6,750.8 1061.2,881.4 1056.6,884.6" fill="#bca97f" stroke="#15120a" stroke-width="0.95" stroke-linejoin="round"/>
<polygon points="710.0,740.2 714.8,738.6 1092.1,860.2 1087.5,863.4" fill="#bca97f" stroke="#15120a" stroke-width="0.95" stroke-linejoin="round"/>
<polygon points="744.9,728.7 749.3,727.3 1119.4,841.5 1115.5,844.2" fill="#bca97f" stroke="#15120a" stroke-width="0.95" stroke-linejoin="round"/>
<polygon points="776.3,718.4 780.4,717.0 1144.9,824.0 1141.7,826.2" fill="#bca97f" stroke="#15120a" stroke-width="0.95" stroke-linejoin="round"/>
<polygon points="806.9,708.4 810.8,707.1 1169.6,807.1 1166.5,809.2" fill="#bca97f" stroke="#15120a" stroke-width="0.95" stroke-linejoin="round"/>
<polygon points="835.8,698.9 839.3,697.7 1191.9,791.8 1188.8,793.9" fill="#bca97f" stroke="#15120a" stroke-width="0.95" stroke-linejoin="round"/>
<polygon points="862.9,690.0 866.1,688.9 1212.3,777.8 1209.7,779.6" fill="#bca97f" stroke="#15120a" stroke-width="0.95" stroke-linejoin="round"/>
<polygon points="889.2,681.3 892.0,680.4 1231.0,765.0 1228.2,766.9" fill="#bca97f" stroke="#15120a" stroke-width="0.95" stroke-linejoin="round"/>
<polygon points="516.2,804.1 520.2,801.2 929.7,971.6 924.5,974.3" fill="#bca97f" stroke="#15120a" stroke-width="0.95"/>
<polygon points="924.5,974.3 929.7,971.6 1239.6,759.1 1248.6,757.6 931.8,977.0" fill="#c4b187" stroke="#15120a" stroke-width="0.95" stroke-linejoin="round"/>
<polyline points="512.1,802.4 900.0,676.3" fill="none" stroke="#1c180e" stroke-width="0.9"/>
<polyline points="514.5,804.4 901.5,678.4 1239.6,759.1" fill="none" stroke="#15120a" stroke-width="0.8"/>
<polygon points="516.2,804.1 924.5,974.3 926.0,997.6 523.3,841.4" fill="url(#lg)" stroke="#1c180e" stroke-width="0.8" stroke-linejoin="round"/>
<polygon points="516.2,804.1 924.5,974.3 926.0,997.6 523.3,841.4" fill="url(#lg2)"/>
<polygon points="512.1,802.4 516.2,804.1 523.3,841.4 520.6,839.7" fill="#9a8a68" stroke="#1c180e" stroke-width="0.8" stroke-linejoin="round"/>
<polygon points="924.5,974.3 931.8,977.0 932.7,1001.4 926.0,997.6" fill="#b5a37b" stroke="#2a2418" stroke-width="0.7"/>
<polygon points="931.8,977.0 1248.6,757.6 1247.7,775.7 932.7,1001.4" fill="#cdbc93" stroke="#2a2418" stroke-width="0.8"/></g>
</svg>
</body></html>
